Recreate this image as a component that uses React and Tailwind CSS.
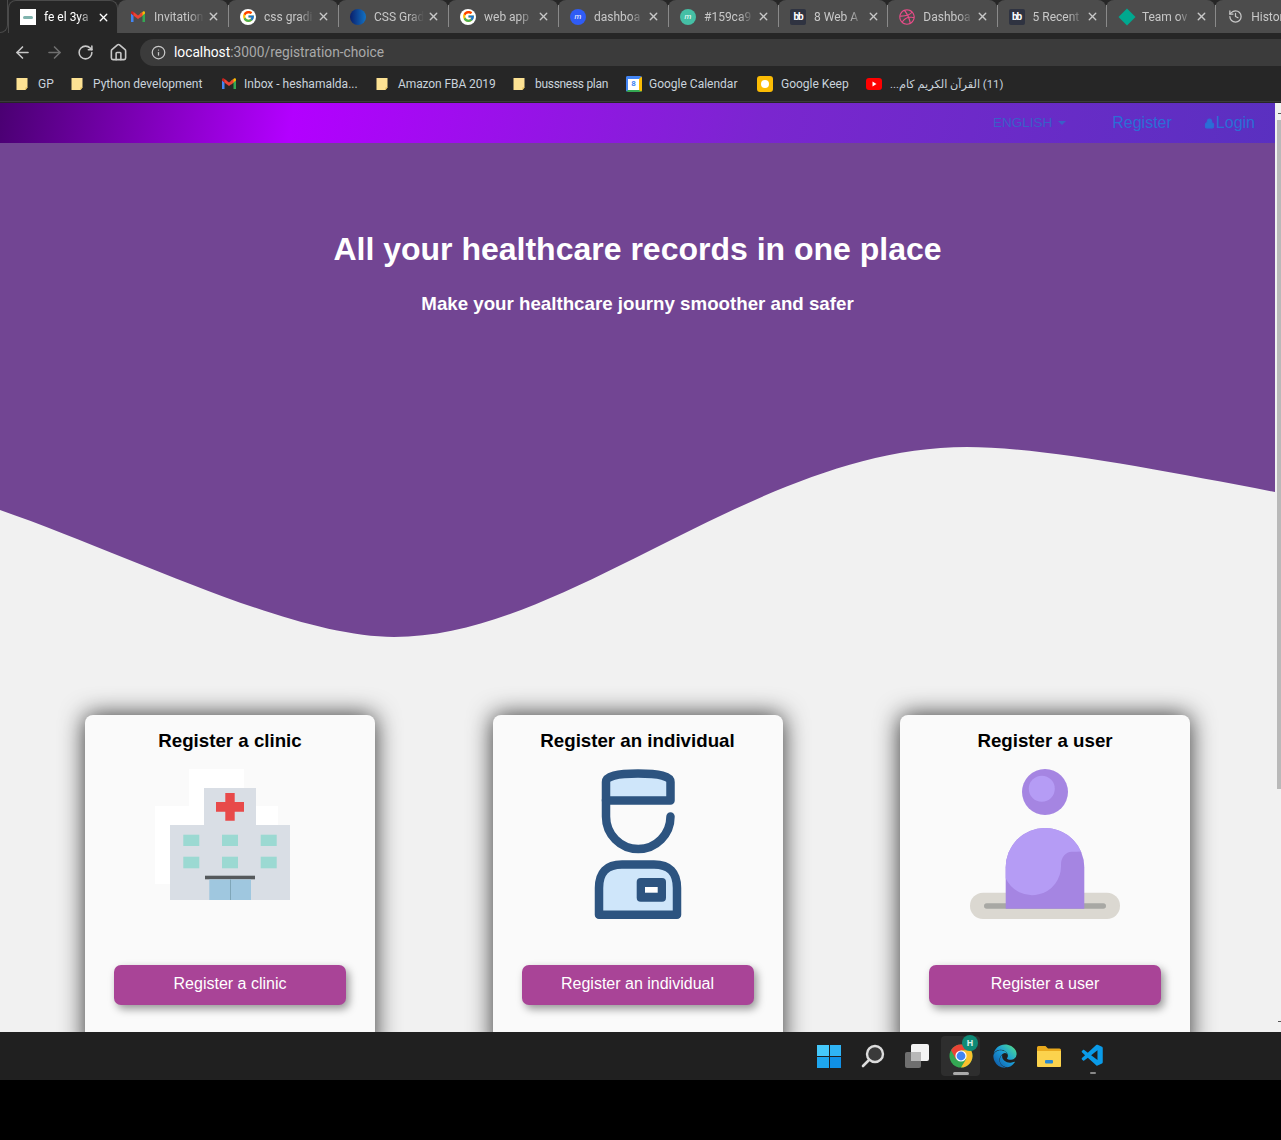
import React from "react";
import { ArrowLeft, ArrowRight, RotateCw, Home, Info, History, X, Lock } from "lucide-react";
import { FcGoogle } from "react-icons/fc";
import { FaDribbble, FaEdge } from "react-icons/fa";
import { VscVscode } from "react-icons/vsc";

const GmailIcon = ({ size = 16 }) => (
  <svg width={size} height={size} viewBox="0 0 16 16" className="shrink-0">
    <path d="M1 4v9h2.5V6.5z" fill="#4285f4" />
    <path d="M15 4v9h-2.5V6.5z" fill="#34a853" />
    <path d="M12.5 6.5L15 4.6V3.6c0-1-1.2-1.6-2-1l-.5.4L10 5v3.4z" fill="#fbbc04" />
    <path d="M3.5 6.5L1 4.6V3.6c0-1 1.2-1.6 2-1l.5.4L6 5v3.4z" fill="#c5221f" />
    <path d="M3.5 3L8 6.4 12.5 3v3.5L8 9.9 3.5 6.5z" fill="#ea4335" />
  </svg>
);

const GoogleIcon = () => (
  <span className="flex h-4 w-4 items-center justify-center rounded-full bg-white">
    <FcGoogle size={13} />
  </span>
);

const BbIcon = () => (
  <span className="flex h-4 w-4 items-center justify-center rounded-[2px] bg-[#2f3341] text-[10px] leading-none font-bold tracking-[-1px] text-white">
    bb
  </span>
);

const MIcon = ({ color }) => (
  <span className={`flex h-4 w-4 items-center justify-center rounded-full text-[8px] leading-none italic text-white ${color}`}>
    m
  </span>
);

const FolderBookmark = () => (
  <svg width="12" height="14" viewBox="0 0 12 14" className="shrink-0">
    <path d="M0.5 1h11v9.5L9.5 13h-9z" fill="#fde293" />
    <path d="M9.5 10.5h2L9.5 13z" fill="#e0b84c" />
  </svg>
);

const tabs = [
  { title: "fe el 3ya", active: true, icon: (
    <span className="flex h-4 w-4 items-center justify-center bg-white">
      <span className="h-[3px] w-[10px] rounded-full bg-[#7fb3ad]" />
    </span>
  ) },
  { title: "Invitation", icon: <GmailIcon /> },
  { title: "css gradi", icon: <GoogleIcon /> },
  { title: "CSS Grad", icon: <span className="h-4 w-4 rounded-full bg-[linear-gradient(90deg,#0a1f6b,#1272c4)]" /> },
  { title: "web app", icon: <GoogleIcon /> },
  { title: "dashboa", icon: <MIcon color="bg-[#2f5cf5]" /> },
  { title: "#159ca9", icon: <MIcon color="bg-[#45bfa5]" /> },
  { title: "8 Web A", narrow: true, icon: <BbIcon /> },
  { title: "Dashboa", narrow: true, icon: <FaDribbble size={16} color="#ea4c89" /> },
  { title: "5 Recent", narrow: true, icon: <BbIcon /> },
  { title: "Team ov", narrow: true, icon: <span className="ml-[2px] h-3 w-3 rotate-45 bg-[#00a88f]" /> },
  { title: "History", narrow: true, icon: <History size={15} color="#c8c8c8" /> },
];

const bookmarks = [
  { label: "GP", box: "w-[55px] gap-[10px]", icon: <FolderBookmark /> },
  { label: "Python development", box: "w-[150px] gap-[10px]", icon: <FolderBookmark /> },
  { label: "Inbox - heshamalda...", box: "w-[155px] gap-[7px]", icon: <GmailIcon /> },
  { label: "Amazon FBA 2019", box: "w-[137px] gap-[10px]", text: "tracking-[-0.1px]", icon: <FolderBookmark /> },
  { label: "bussness plan", box: "w-[113px] gap-[10px]", text: "tracking-[-0.3px]", icon: <FolderBookmark /> },
  { label: "Google Calendar", box: "w-[131px] gap-[7px]", icon: (
    <span className="flex h-4 w-4 shrink-0 items-center justify-center rounded-[2px] border-t-[3px] border-r-[3px] border-b-[2px] border-l-[2px] border-t-[#4285f4] border-r-[#fbbc04] border-b-[#34a853] border-l-[#4285f4] bg-white text-[8px] leading-none font-bold text-[#4285f4]">
      8
    </span>
  ) },
  { label: "Google Keep", box: "w-[109px] gap-[8px]", icon: (
    <span className="flex h-4 w-4 shrink-0 items-center justify-center rounded-[3px] bg-[#fbbc04]">
      <span className="h-2 w-2 rounded-full bg-white" />
    </span>
  ) },
  { label: "(11) القرآن الكريم كام...", box: "gap-[8px]", text: "pt-[4px] text-[11.3px]", rtl: true, icon: (
    <svg width="16" height="12" viewBox="0 0 16 12" className="shrink-0">
      <rect width="16" height="12" rx="3" fill="#f00" />
      <path d="M6.5 3.5v5L10.5 6z" fill="#fff" />
    </svg>
  ) },
];

const ChromeHeader = () => (
  <div className="h-[103px] shrink-0 bg-[#262626] font-['Roboto',sans-serif]">
    {/* tab strip */}
    <div className="flex h-[33px] overflow-hidden">
      <div className="h-full w-[8px] shrink-0 rounded-br-[8px] border-r border-b border-[#4a4a4a]" />
      {tabs.map((tab, i) => (
        <div
          key={i}
          className={
            tab.active
              ? "relative flex h-full w-[110px] shrink-0 items-center rounded-t-[8px] border-x border-t border-[#4a4a4a] bg-[#262626] pl-[11px] text-white"
              : tab.narrow
                ? "relative flex h-full w-[109.3px] shrink-0 items-center rounded-t-[8px] bg-[#4c4c4c] pl-[12px] text-[#c8c8c8]"
                : "relative flex h-full w-[110px] shrink-0 items-center rounded-t-[8px] bg-[#4c4c4c] pl-[12px] text-[#c8c8c8]"
          }
        >
          <span className="flex w-4 shrink-0 items-center justify-center">{tab.icon}</span>
          <span className="ml-[8px] w-[50px] text-[12px] whitespace-nowrap [mask-image:linear-gradient(to_right,black_70%,transparent)]">
            {tab.title}
          </span>
          <X size={13} strokeWidth={2.5} className="ml-[3px] shrink-0" />
          {!tab.active && i > 1 && <span className="absolute top-[5px] left-0 h-[22px] w-px bg-[#8a8a8a]" />}
        </div>
      ))}
    </div>

    {/* toolbar */}
    <div className="flex h-[33px] items-center pt-[5px] pl-[13px]">
      <ArrowLeft size={19} color="#c8c8c8" />
      <ArrowRight size={19} color="#6f6f6f" className="ml-[13px]" />
      <RotateCw size={17} color="#c8c8c8" strokeWidth={2.2} className="ml-[13px]" />
      <Home size={19} color="#c8c8c8" className="ml-[15px]" />
      <div className="ml-[12px] flex h-[27px] flex-1 items-center rounded-l-[14px] bg-[#3b3b3b] pl-[11px] text-[13.75px] text-[#a9a9a9]">
        <Info size={15} color="#c8c8c8" />
        <span className="ml-[8px]">
          <span className="text-white">localhost</span>:3000/registration-choice
        </span>
      </div>
    </div>

    {/* bookmarks bar */}
    <div className="flex h-[36px] items-center border-b border-[#3a3a3a] pl-[16px] text-[12px] text-[#c9d3dc]">
      {bookmarks.map((b, i) => (
        <div key={i} className={`flex shrink-0 items-center ${b.box}`}>
          {b.icon}
          <span dir={b.rtl ? "rtl" : "ltr"} className={`font-['Roboto','DejaVu_Sans',sans-serif] whitespace-nowrap ${b.text || ""}`}>
            {b.label}
          </span>
        </div>
      ))}
    </div>
  </div>
);

const ClinicArt = () => (
  <svg viewBox="114 769 232 150" className="block h-[150px] w-[232px]">
    <path d="M189 769h55v37h34v78h-123v-78h34z" fill="#fff" />
    <path d="M204 788h52v37h34v75h-120v-75h34z" fill="#d9dee5" />
    <path d="M225.3 793h9.4v9h9.3v9.7h-9.3v9h-9.4v-9H216V802h9.3z" fill="#e84a4a" />
    {[183.3, 222, 260.7].map((x) => (
      <g key={x} fill="#9bd9d2">
        <rect x={x} y="834.7" width="16" height="11.3" />
        <rect x={x} y="856.7" width="16" height="11.6" />
      </g>
    ))}
    <rect x="205" y="875.7" width="50" height="3.6" fill="#55595c" />
    <rect x="209.3" y="879.5" width="41.7" height="20.5" fill="#9fc7df" />
    <rect x="230" y="879.5" width="1" height="20.5" fill="#7fa6b8" />
  </svg>
);

const IndividualArt = () => (
  <svg viewBox="522 769 232 150" className="block h-[150px] w-[232px]">
    <g stroke="#2d5480" strokeWidth="8.5" fill="none" strokeLinecap="round" strokeLinejoin="round">
      <path d="M606 800.5V782Q606 773.5 638 773.5Q670.5 773.5 670.5 782V800.5Z" fill="#cfe6fa" />
      <path d="M606 800V816.5A32.2 32.5 0 0 0 670.5 816.5" />
      <path d="M599 914.7V888Q599 864.5 622 864.5H654Q677 864.5 677 888V914.7Z" fill="#cfe6fa" />
    </g>
    <rect x="636.7" y="878" width="29.3" height="23.7" rx="4" fill="#2d5480" />
    <rect x="645" y="887" width="12.7" height="5.7" fill="#fff" />
  </svg>
);

const UserArt = () => (
  <svg viewBox="929 769 232 150" className="block h-[150px] w-[232px]">
    <circle cx="1045" cy="792" r="23" fill="#a585e2" />
    <circle cx="1041.8" cy="788.7" r="13" fill="#b59cf5" />
    <rect x="970" y="892.7" width="150" height="26.3" rx="13" fill="#dbd8d1" />
    <rect x="984" y="903.3" width="122" height="5.4" rx="2.7" fill="#a8a8a4" />
    <path d="M1005.7 908.7V867.3A39.3 39.3 0 0 1 1084.3 867.3V908.7Z" fill="#a585e2" />
    <path d="M1005.7 878.3V867.3A39.3 39.3 0 0 1 1081 851.5Q1076.5 851.7 1071.7 851.7A10.7 13 0 0 0 1061 865A29 29 0 0 1 1005.7 878.3Z" fill="#b59cf5" />
  </svg>
);

const cards = [
  { title: "Register a clinic", art: <ClinicArt /> },
  { title: "Register an individual", art: <IndividualArt /> },
  { title: "Register a user", art: <UserArt /> },
];

const Scrollbar = () => (
  <div className="relative w-[6px] shrink-0 bg-[#f1f1f1]">
    <span className="absolute top-[10px] right-0 h-px w-[3px] bg-[#555]" />
    <div className="mt-[17px] ml-[2px] h-[669px] w-[4px] bg-[#b9b9b9]" />
    <span className="absolute top-[918px] right-0 h-px w-[3px] bg-[#555]" />
  </div>
);

const Page = () => (
  <div className="flex h-[929px] shrink-0 overflow-hidden bg-[#f1f1f1] font-['Liberation_Sans',Arial,sans-serif]">
    <div className="w-[1275px] shrink-0">
      <nav className="flex h-[40px] items-center justify-end bg-[linear-gradient(100deg,#4a0072_0%,#b300ff_23%,#7a26cf_60%,#5a30c0_100%)] pr-[20px] text-[16px] text-[#2b6ed6]">
        <span className="flex items-center text-[13.5px] text-[#3a5fc8]">
          ENGLISH
          <span className="ml-[6px] h-0 w-0 border-x-[4px] border-t-[4px] border-x-transparent border-t-[#3a5fc8]" />
        </span>
        <span className="ml-[46px]">Register</span>
        <span className="ml-[32px] flex items-center">
          <Lock size={11} fill="#2b6ed6" strokeWidth={2} className="mr-[1px]" />
          Login
        </span>
      </nav>

      <div className="h-[304px] bg-[#724593] pt-[87px] text-center text-white">
        <h1 className="text-[32px] leading-[38px] font-bold">All your healthcare records in one place</h1>
        <h3 className="mt-[25px] text-[18.72px] leading-[22px] font-bold">Make your healthcare journy smoother and safer</h3>
      </div>
      <svg viewBox="0 447 1275 190" className="block h-[190px] w-[1275px]">
        <path
          d="M0 447V510C130 555 290 637 394 637C570 637 755 447 967 447C1040 447 1160 470 1275 492V447Z"
          fill="#724593"
        />
      </svg>

      <div className="mt-[78px] flex justify-between pr-[85px] pl-[85px]">
        {cards.map((card) => (
          <div
            key={card.title}
            className="h-[340px] w-[290px] rounded-lg bg-[#fafafa] px-[29px] pt-[14px] shadow-[0_0_25px_rgba(0,0,0,0.8)]"
          >
            <h4 className="text-center text-[18.72px] leading-[24px] font-bold text-black">{card.title}</h4>
            <div className="mt-[16px]">{card.art}</div>
            <button className="mt-[46px] h-[40px] w-[232px] rounded-[7px] bg-[#a94497] pb-[2px] text-[16px] text-white shadow-[3px_4px_8px_rgba(0,0,0,0.4)]">
              {card.title}
            </button>
          </div>
        ))}
      </div>
    </div>
    <Scrollbar />
  </div>
);

const ChromeLogo = () => (
  <svg width="24" height="24" viewBox="0 0 24 24">
    <circle cx="12" cy="12" r="11.5" fill="#34a853" />
    <path d="M12 .5A11.5 11.5 0 0 1 22 6.3L12 6.3 6.8 15 2.1 6.2A11.5 11.5 0 0 1 12 .5z" fill="#ea4335" />
    <path d="M22 6.3A11.5 11.5 0 0 1 12 23.5L17.2 15 12 6.3z" fill="#fbc02d" />
    <circle cx="12" cy="12" r="5.6" fill="#fff" />
    <circle cx="12" cy="12" r="4.4" fill="#4285f4" />
  </svg>
);

const EdgeLogo = () => (
  <span className="relative block h-[24px] w-[24px]">
    <svg width="0" height="0" className="absolute">
      <defs>
        <linearGradient id="edgeFill" x1="0" y1="1" x2="1" y2="0">
          <stop offset="0%" stopColor="#0d4f9e" />
          <stop offset="50%" stopColor="#1a9ad8" />
          <stop offset="80%" stopColor="#3cc8a8" />
          <stop offset="100%" stopColor="#86e05a" />
        </linearGradient>
      </defs>
    </svg>
    <FaEdge size={24} fill="url(#edgeFill)" stroke="none" />
  </span>
);

const FolderLogo = () => (
  <svg width="24" height="22" viewBox="0 0 24 22">
    <path d="M0 2.5A1.5 1.5 0 0 1 1.5 1h7L11 3.5h11.5A1.5 1.5 0 0 1 24 5v15.5a1.5 1.5 0 0 1-1.5 1.5h-21A1.5 1.5 0 0 1 0 20.5z" fill="#e9a91c" />
    <path d="M0 6h24v14.5a1.5 1.5 0 0 1-1.5 1.5h-21A1.5 1.5 0 0 1 0 20.5z" fill="#fcd34d" />
    <rect x="8" y="15" width="8" height="3.5" rx="1" fill="#2b8ad0" />
  </svg>
);

const Taskbar = () => (
  <div className="flex h-[48px] shrink-0 items-center gap-[20px] bg-[#202020] pl-[817px]">
    <div className="grid h-[23px] w-[24px] grid-cols-2 gap-[1px]">
      <span className="bg-[#45c9fb]" />
      <span className="bg-[#2fb4f5]" />
      <span className="bg-[#1ea6ee]" />
      <span className="bg-[#1090e6]" />
    </div>
    <svg width="24" height="24" viewBox="0 0 24 24" fill="none">
      <circle cx="14" cy="10" r="8" fill="#3a3a3a" stroke="#dcdcdc" strokeWidth="2.4" />
      <path d="M8 16l-6 6" stroke="#dcdcdc" strokeWidth="2.6" strokeLinecap="round" />
    </svg>
    <svg width="24" height="24" viewBox="0 0 24 24">
      <rect y="8" width="16" height="16" rx="2" fill="#6f6f6f" />
      <rect x="6" width="18" height="17" rx="2" fill="#f3f3f3" />
      <rect x="6" y="8" width="10" height="9" fill="#b8b8b8" />
    </svg>
    <div className="relative h-[24px] w-[24px]">
      <span className="absolute top-[-8px] left-[-8px] h-[40px] w-[39px] rounded-[4px] bg-[#2e2e2e]" />
      <span className="absolute top-0 left-0"><ChromeLogo /></span>
      <span className="absolute top-[-9px] left-[13px] flex h-4 w-4 items-center justify-center rounded-full bg-[#0f8a76] text-[9px] font-bold text-[#d5efe9]">
        H
      </span>
      <span className="absolute top-[28px] left-[4px] h-[3px] w-[16px] rounded-full bg-[#aaaaaa]" />
    </div>
    <EdgeLogo />
    <FolderLogo />
    <div className="relative h-[24px] w-[24px]">
      <VscVscode size={26} color="#0a9be8" className="absolute top-[-1px] left-[-1px]" />
      <span className="absolute top-[28px] left-[9px] h-[2px] w-[6px] rounded-full bg-[#888888]" />
    </div>
  </div>
);

export default function App() {
  return (
    <div className="flex h-[1140px] w-[1281px] flex-col overflow-hidden bg-black">
      <ChromeHeader />
      <Page />
      <Taskbar />
    </div>
  );
}
